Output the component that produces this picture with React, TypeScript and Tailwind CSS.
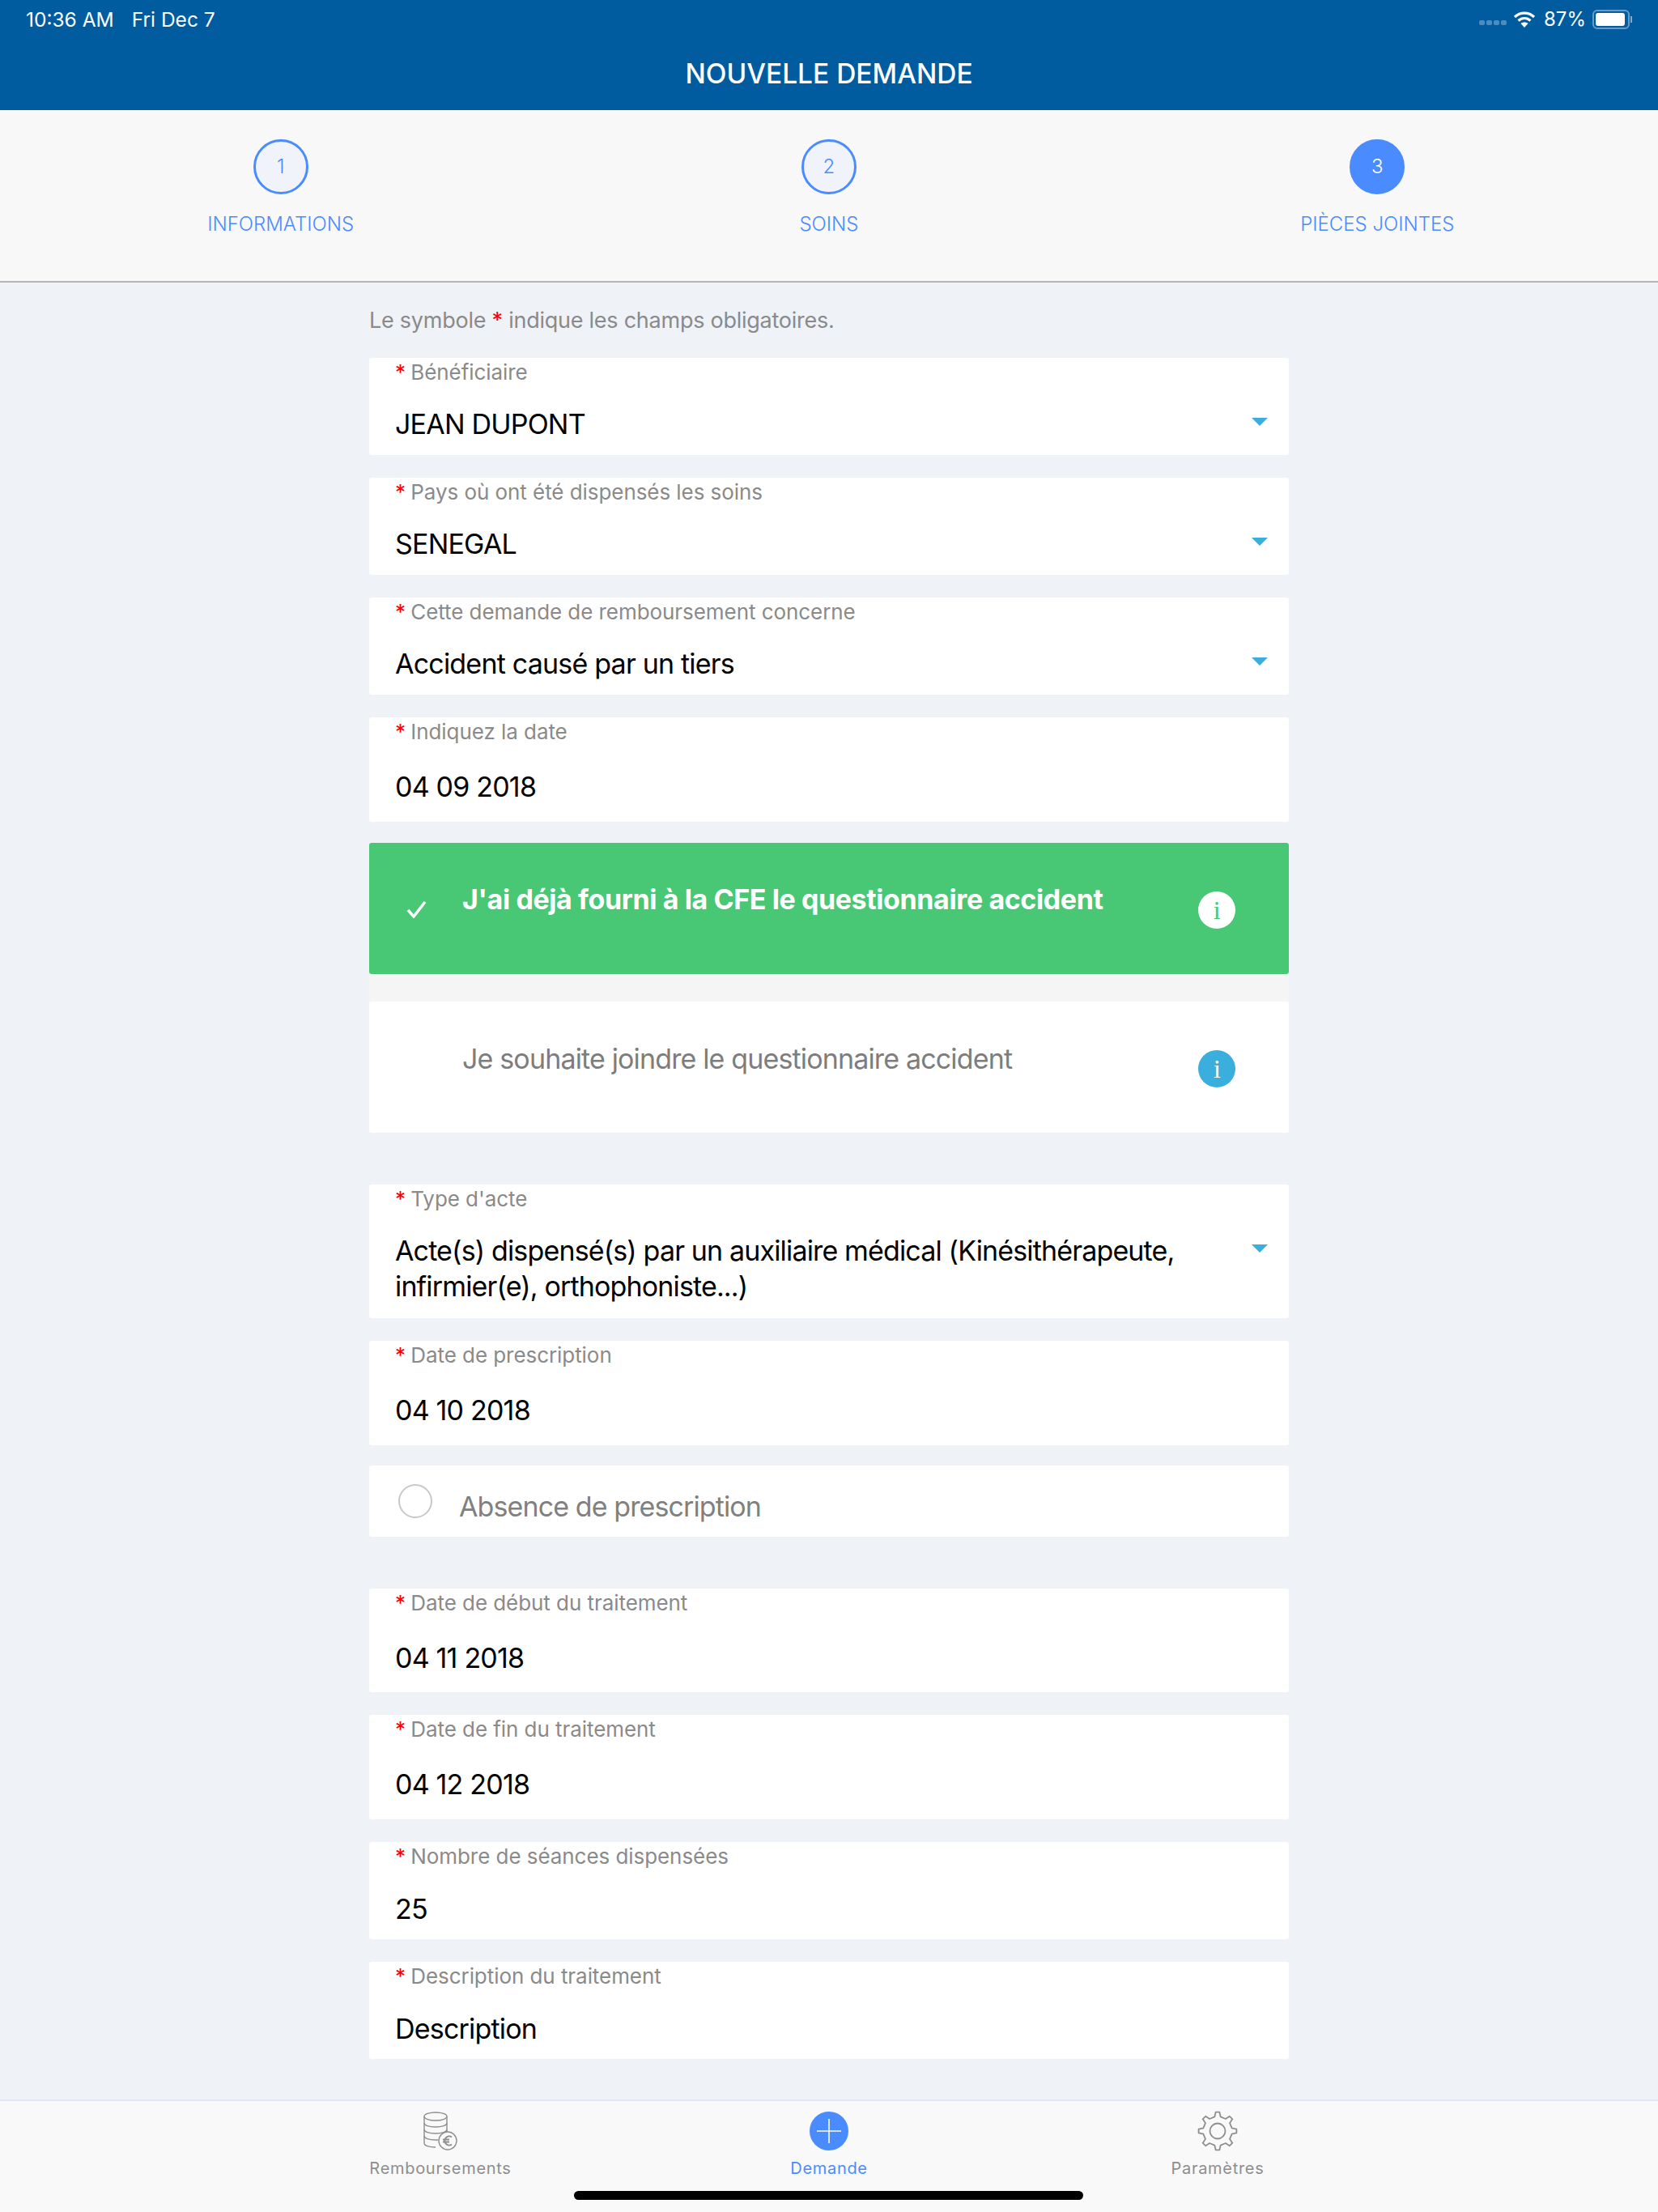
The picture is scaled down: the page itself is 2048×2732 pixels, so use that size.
const FONT = "font-['Inter','Liberation_Sans',sans-serif]";

function Field({
  label,
  value,
  select,
  height,
  valueTop,
}: {
  label: string;
  value: string;
  select?: boolean;
  height: string;
  valueTop: string;
}) {
  return (
    <div className={`relative rounded-[3px] bg-white pl-[32px] pr-[110px] ${height}`}>
      <Label text={label} />
      <div className={`text-[34px] leading-[44px] tracking-[-0.8px] text-black ${valueTop}`}>{value}</div>
      {select && <Arrow />}
    </div>
  );
}

function Label({ text }: { text: string }) {
  return (
    <div className="pt-[2px] text-[26px] leading-[32px] tracking-[-0.06px] text-[#8a8a8a]">
      <span className="mr-[-1px] text-[#ff0000]">*</span> {text}
    </div>
  );
}

function Arrow() {
  return <div className="absolute right-[26px] top-[74px] h-0 w-0 border-x-[10px] border-t-[10px] border-x-transparent border-t-[#3aaedd]" />;
}

function Step({ n, label, active }: { n: number; label: string; active?: boolean }) {
  return (
    <div className="flex flex-1 flex-col items-center">
      <div
        className={`flex h-[68px] w-[68px] items-center justify-center rounded-full border-[3px] border-[#4a8cff] text-[24px] font-light ${
          active ? "bg-[#4a8cff] text-white" : "bg-[#f0f3f9] text-[#4a8cff]"
        }`}
      >
        {n}
      </div>
      <div className="mt-[22px] text-[24px] leading-[30px] font-light text-[#4a8cff]">{label}</div>
    </div>
  );
}

function Info({ green }: { green?: boolean }) {
  return (
    <div
      className={`absolute right-[66px] top-[60px] flex h-[46px] w-[46px] items-center justify-center rounded-full font-['Liberation_Serif',serif] text-[32px] font-normal ${
        green ? "bg-white text-[#48c774]" : "bg-[#3aaedd] text-white"
      }`}
    >
      i
    </div>
  );
}

function Coins() {
  return (
    <svg width="44" height="48" viewBox="0 0 44 48" fill="none" stroke="#8e8e8e" strokeWidth="1.4">
      <ellipse cx="16" cy="6" rx="14" ry="5" />
      <path d="M2 6v33c0 3 6 5 14 5" />
      <path d="M30 6v20" />
      <path d="M2 14c0 3 6 5 14 5s14-2 14-5" />
      <path d="M2 22c0 3 6 5 14 5s14-2 14-5" />
      <path d="M2 30c0 3 6 5 14 5h3" />
      <circle cx="31" cy="36" r="11" fill="#f9f9f9" />
      <path d="M36 31.5a5.5 5.5 0 1 0 0 9M25 34.500h8M25 37.500h8" strokeWidth="2" />
    </svg>
  );
}

// eight rounded-off teeth, same outline as the tab icon
function gearPath() {
  const pts: string[] = [];
  const teeth = 8;
  for (let i = 0; i < teeth; i++) {
    const a = (i * 2 * Math.PI) / teeth - Math.PI / 2;
    const step = (2 * Math.PI) / teeth;
    const add = (r: number, off: number) => {
      pts.push(`${(25 + r * Math.cos(a + off)).toFixed(2)} ${(25 + r * Math.sin(a + off)).toFixed(2)}`);
    };
    add(18, -step * 0.26);
    add(23.500, -step * 0.13);
    add(23.500, step * 0.13);
    add(18, step * 0.26);
  }
  return `M${pts.join("L")}Z`;
}

function Gear() {
  return (
    <svg width="50" height="50" viewBox="0 0 50 50" fill="none" stroke="#8e8e8e" strokeWidth="1.8" strokeLinejoin="round">
      <path d={gearPath()} />
      <circle cx="25" cy="25" r="9.500" />
    </svg>
  );
}

function Tab({ label, active, children }: { label: string; active?: boolean; children: React.ReactNode }) {
  return (
    <div className="flex w-[480px] flex-col items-center">
      <div className="flex h-[48px] items-center justify-center">{children}</div>
      <div className={`mt-[9px] text-[20px] leading-[26px] tracking-[0.7px] ${active ? "text-[#4a8cff]" : "text-[#8e8e8e]"}`}>
        {label}
      </div>
    </div>
  );
}

export default function App() {
  return (
    <div className={`flex h-[2732px] w-[2048px] flex-col overflow-hidden bg-[#eff3f8] ${FONT}`}>
      <header className="relative h-[136px] bg-[#005b9f] text-white">
        <div className="flex items-center justify-between pl-[32px] pr-[32px] pt-[10px] text-[24.500px] leading-[28px]">
          <div className="flex gap-[22px]">
            <span>10:36 AM</span>
            <span>Fri Dec 7</span>
          </div>
          <div className="flex items-center text-[24px]">
            <div className="mr-[8px] mt-[8px] flex gap-[2px]">
              <span className="h-[6px] w-[7px] rounded-[2px] bg-white/30" />
              <span className="h-[6px] w-[7px] rounded-[2px] bg-white/30" />
              <span className="h-[6px] w-[7px] rounded-[2px] bg-white/30" />
              <span className="h-[6px] w-[7px] rounded-[2px] bg-white/30" />
            </div>
            <svg width="28" height="22" viewBox="0 0 28 22" className="mr-[10px]" fill="none" stroke="#fff" strokeWidth="3.2">
              <path d="M2 8c7-6.500 17-6.500 24 0" />
              <path d="M6.500 12.500c4.500-4 10.500-4 15 0" />
              <path d="M14 21l-4.500-5c2.500-2 6.500-2 9 0z" fill="#fff" stroke="none" />
            </svg>
            <span>87%</span>
            <div className="ml-[8px] flex h-[24px] w-[46px] items-center rounded-[6px] border-2 border-white/40 p-[2px]">
              <div className="h-full w-[36px] rounded-[3px] bg-white" />
            </div>
            <div className="ml-[1px] h-[8px] w-[2px] bg-white/50" />
          </div>
        </div>
        <div className="mt-[31px] text-center text-[33.500px] leading-[44px] font-medium">NOUVELLE DEMANDE</div>
      </header>

      <div className="flex h-[213px] border-b-2 border-[#b5b5b5] bg-[#f8f8f8] px-[8px] pt-[36px]">
        <Step n={1} label="INFORMATIONS" />
        <Step n={2} label="SOINS" />
        <Step n={3} label="PIÈCES JOINTES" active />
      </div>

      <main className="mx-auto flex w-[1136px] flex-1 flex-col">
        <div className="pt-[29px] pb-[28px] text-[27px] leading-[36px] tracking-[-0.25px] text-[#8a8a8a]">
          Le symbole <span className="text-[#ff0000]">*</span> indique les champs obligatoires.
        </div>
        <div className="flex flex-col gap-[28px]">
          <Field label="Bénéficiaire" value="JEAN DUPONT" select height="h-[120px]" valueTop="mt-[26px]" />
          <Field label="Pays où ont été dispensés les soins" value="SENEGAL" select height="h-[120px]" valueTop="mt-[26px]" />
          <Field label="Cette demande de remboursement concerne" value="Accident causé par un tiers" select height="h-[120px]" valueTop="mt-[26px]" />
          <Field label="Indiquez la date" value="04 09 2018" height="h-[129px]" valueTop="mt-[30px]" />
        </div>

        <div className="mt-[26px] flex flex-col gap-[34px] bg-[#f5f5f5]">
          <div className="relative h-[162px] rounded-[3px] bg-[#48c774] pl-[115px] pt-[48px] text-[34px] leading-[44px] font-bold tracking-[-0.4px] text-white">
            <svg width="26" height="22" viewBox="0 0 26 22" className="absolute left-[46px] top-[71px]" fill="none" stroke="#fff" strokeWidth="3.500">
              <path d="M2 12l7 8L23 2" />
            </svg>
            J'ai déjà fourni à la CFE le questionnaire accident
            <Info green />
          </div>
          <div className="relative h-[162px] rounded-[3px] bg-white pl-[115px] pt-[49px] text-[34px] leading-[44px] tracking-[-0.85px] text-[#7d7d7d]">
            Je souhaite joindre le questionnaire accident
            <Info />
          </div>
        </div>

        <div className="mt-[64px] flex flex-col">
          <div className="relative h-[165px] rounded-[3px] bg-white pl-[32px] pr-[110px]">
            <Label text="Type d'acte" />
            <div className="mt-[26px] text-[34px] leading-[44px] tracking-[-0.85px] text-black">
              Acte(s) dispensé(s) par un auxiliaire médical (Kinésithérapeute, infirmier(e), orthophoniste...)
            </div>
            <Arrow />
          </div>
          <div className="mt-[28px]">
            <Field label="Date de prescription" value="04 10 2018" height="h-[129px]" valueTop="mt-[30px]" />
          </div>
          <div className="mt-[25px] flex h-[88px] items-center rounded-[3px] bg-white pl-[36px] text-[34px] tracking-[-0.9px] text-[#808080]">
            <div className="h-[42px] w-[42px] rounded-full border-2 border-[#c8c8c8]" />
            <span className="ml-[33px] mt-[12px]">Absence de prescription</span>
          </div>
        </div>

        <div className="mt-[64px] flex flex-col gap-[28px]">
          <Field label="Date de début du traitement" value="04 11 2018" height="h-[128px]" valueTop="mt-[30px]" />
          <Field label="Date de fin du traitement" value="04 12 2018" height="h-[129px]" valueTop="mt-[30px]" />
          <Field label="Nombre de séances dispensées" value="25" height="h-[120px]" valueTop="mt-[27px]" />
          <Field label="Description du traitement" value="Description" height="h-[120px]" valueTop="mt-[27px]" />
        </div>
      </main>

      <footer className="relative flex h-[139px] justify-center border-t-2 border-[#e4e6f5] bg-[#f9f9f9] pt-[13px]">
        <Tab label="Remboursements">
          <Coins />
        </Tab>
        <Tab label="Demande" active>
          <div className="flex h-[48px] w-[48px] items-center justify-center rounded-full bg-[#4a8cff]">
            <svg width="30" height="30" viewBox="0 0 30 30" stroke="#fff" strokeWidth="1.6">
              <path d="M15 0v30M0 15h30" />
            </svg>
          </div>
        </Tab>
        <Tab label="Paramètres">
          <Gear />
        </Tab>
        <div className="absolute bottom-[15px] left-[709px] h-[11px] w-[629px] rounded-full bg-black" />
      </footer>
    </div>
  );
}
